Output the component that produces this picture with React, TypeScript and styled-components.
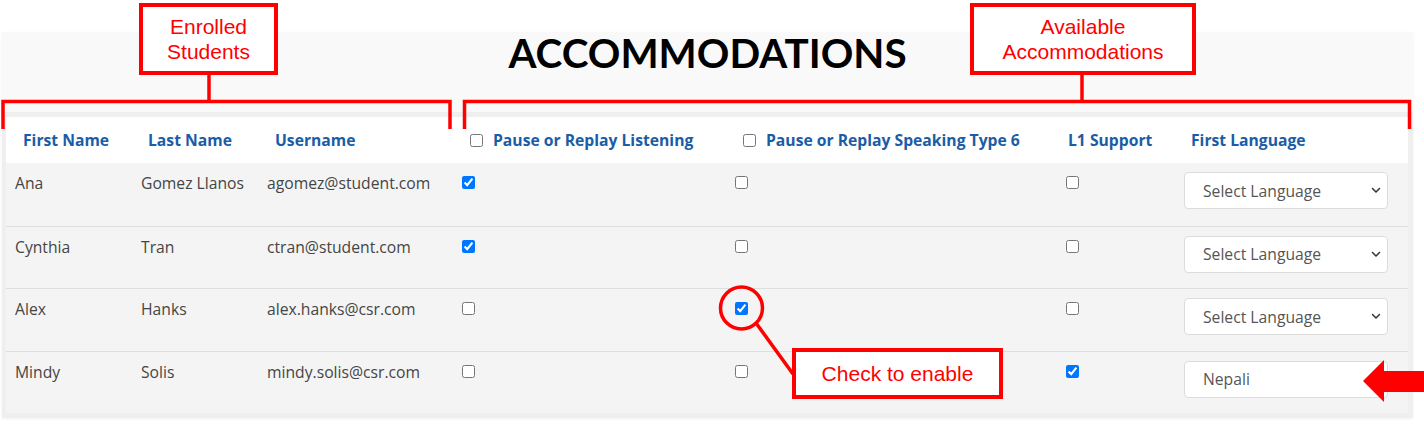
import React, {FC} from 'react';
import styled, {createGlobalStyle} from 'styled-components';

const GlobalStyle=createGlobalStyle`
body{
  margin:0;
  background:#fff;
  font-family:"Open Sans", "Liberation Sans", sans-serif;
}
`;

const BODY_COLS='126px 126px 195px 273px 331px 118px 233px';
const HEAD_COLS='125px 127px 195px 273px 325px 123px 234px';

const Page=styled.div`
position:relative;
width:1424px;
height:425px;
box-sizing:border-box;
padding:32px 0 0 2px;
overflow:hidden;
`;

const Panel=styled.section`
display:flex;
flex-direction:column;
width:1411px;
background:#f9f9f9;
box-shadow:0 1px 3px rgba(0,0,0,0.06);
`;

const Title=styled.h1`
margin:0;
padding:1px 0 39px;
font-family:Lato, "Open Sans", sans-serif;
font-weight:700;
font-size:40.4px;
line-height:40px;
text-align:center;
color:#000;
`;

const TableFrame=styled.div`
background:#efefef;
padding:5px 5px 5px 4px;
`;

const HeaderRow=styled.div`
display:grid;
grid-template-columns:${HEAD_COLS};
height:46px;
background:#fff;
`;

const HeadCell=styled.div`
display:flex;
align-items:center;
gap:10px;
padding-left:17px;
font-size:15.7px;
font-weight:700;
color:#1a5da6;
white-space:nowrap;
`;

const Row=styled.div<{$first?:boolean}>`
display:grid;
grid-template-columns:${BODY_COLS};
height:62.5px;
box-sizing:border-box;
background:#f4f4f4;
border-top:${p=>p.$first?'none':'1px solid #dedede'};
`;

const Cell=styled.div`
padding:9px 0 0 9px;
font-size:15.7px;
line-height:22px;
color:#454545;
white-space:nowrap;
`;

const Check=styled.input.attrs({type:'checkbox'})<{$offset?:number}>`
margin:${p=>p.$offset??0}px 0 0 0;
width:13px;
height:13px;
display:block;
`;

const LanguageSelect=styled.div`
display:flex;
align-items:center;
justify-content:space-between;
box-sizing:border-box;
width:204px;
height:37px;
padding:0 6px 0 18px;
background:#fff;
border:1px solid #dcdcdc;
border-radius:4px;
font-size:15.7px;
color:#555;
`;

const Callout=styled.div<{$x:number;$y:number;$w:number;$h:number}>`
position:absolute;
left:${p=>p.$x}px;
top:${p=>p.$y}px;
width:${p=>p.$w}px;
height:${p=>p.$h}px;
box-sizing:border-box;
display:flex;
align-items:center;
justify-content:center;
text-align:center;
background:#fff;
border:4px solid #f00;
font-family:"Liberation Sans", Arial, sans-serif;
font-size:21px;
line-height:25px;
color:#f00;
`;

const Marks=styled.svg`
position:absolute;
left:0;
top:0;
pointer-events:none;
`;

const Chevron:FC=()=>(
    <svg width="10" height="7" viewBox="0 0 10 7">
        <path d="M1.5 1.5 L5 5 L8.5 1.5" fill="none" stroke="#333" strokeWidth="1.5" strokeLinecap="round" strokeLinejoin="round"/>
    </svg>
);

type Student={first:string;last:string;user:string;listen:boolean;speak:boolean;l1:boolean;lang:string};

const students:Student[]=[
    {first:'Ana',last:'Gomez Llanos',user:'agomez@student.com',listen:true,speak:false,l1:false,lang:'Select Language'},
    {first:'Cynthia',last:'Tran',user:'ctran@student.com',listen:true,speak:false,l1:false,lang:'Select Language'},
    {first:'Alex',last:'Hanks',user:'alex.hanks@csr.com',listen:false,speak:true,l1:false,lang:'Select Language'},
    {first:'Mindy',last:'Solis',user:'mindy.solis@csr.com',listen:false,speak:false,l1:true,lang:'Nepali'},
];

const App:FC=()=>{
    return(
        <Page>
            <GlobalStyle/>
            <Panel>
                <Title>ACCOMMODATIONS</Title>
                <TableFrame>
                    <HeaderRow>
                        <HeadCell>First Name</HeadCell>
                        <HeadCell>Last Name</HeadCell>
                        <HeadCell>Username</HeadCell>
                        <HeadCell><Check readOnly/>Pause or Replay Listening</HeadCell>
                        <HeadCell><Check readOnly/>Pause or Replay Speaking Type 6</HeadCell>
                        <HeadCell>L1 Support</HeadCell>
                        <HeadCell>First Language</HeadCell>
                    </HeaderRow>
                    {students.map((s,i)=>(
                        <Row key={s.user} $first={i===0}>
                            <Cell>{s.first}</Cell>
                            <Cell>{s.last}</Cell>
                            <Cell>{s.user}</Cell>
                            <Cell><Check $offset={4} readOnly checked={s.listen}/></Cell>
                            <Cell><Check $offset={4} readOnly checked={s.speak}/></Cell>
                            <Cell><Check $offset={4} readOnly checked={s.l1}/></Cell>
                            <Cell>
                                <LanguageSelect>
                                    <span>{s.lang}</span>
                                    <Chevron/>
                                </LanguageSelect>
                            </Cell>
                        </Row>
                    ))}
                </TableFrame>
            </Panel>

            {/* annotation layer */}
            <Marks width="1424" height="425" viewBox="0 0 1424 425">
                <g fill="none" stroke="#f00" strokeWidth="3.5">
                    <path d="M3 129 V101.5 H450 V129"/>
                    <path d="M209 74 V101.5"/>
                    <path d="M464.5 129 V101.5 H1409.5 V129"/>
                    <path d="M1082 74 V101.5"/>
                    <circle cx="741.5" cy="308" r="21"/>
                    <path d="M756 323 L793 374"/>
                </g>
                <polygon fill="#f00" points="1363,381 1384,360 1384,371 1424,371 1424,392 1384,392 1384,402"/>
            </Marks>
            <Callout $x={139} $y={3} $w={139} $h={72}>Enrolled<br/>Students</Callout>
            <Callout $x={970} $y={3} $w={226} $h={72}>Available<br/>Accommodations</Callout>
            <Callout $x={792} $y={348} $w={211} $h={51}>Check to enable</Callout>
        </Page>
    );
}

export default App;
